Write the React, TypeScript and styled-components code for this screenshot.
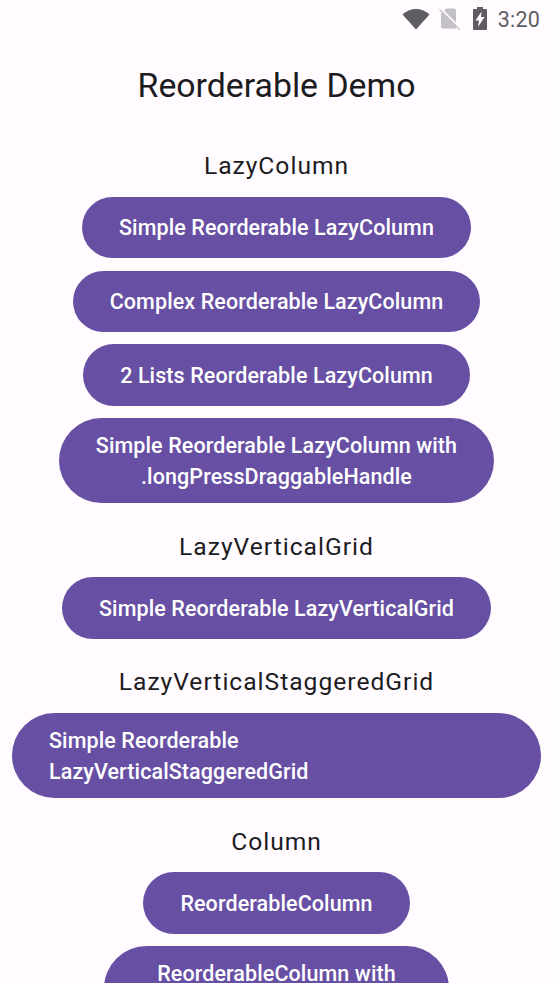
import { Fragment } from 'react';
import styled, { createGlobalStyle } from 'styled-components';

const GlobalStyle = createGlobalStyle`
  html, body {
    margin: 0;
    padding: 0;
    background: #fffbfe;
  }
`;

const Screen = styled.div`
  width: 553px;
  height: 983px;
  overflow: hidden;
  background: #fffbfe;
  font-family: Roboto, "Liberation Sans", sans-serif;
  color: #1c1b1f;
`;

const StatusBar = styled.div`
  height: 37px;
  display: flex;
  align-items: center;
  justify-content: flex-end;
  padding-right: 13px;
  color: #5f5d62;
`;

const StatusIcon = styled.svg<{ $gap?: number }>`
  display: block;
  flex: none;
  margin-left: ${(p) => p.$gap ?? 0}px;
`;

const Clock = styled.span`
  font-size: 21.5px;
  line-height: 26px;
  margin-left: 11px;
  padding-top: 2px;
  letter-spacing: 0.2px;
`;

const Content = styled.div`
  display: flex;
  flex-direction: column;
  align-items: center;
  padding: 0 12px;
`;

const Title = styled.h1`
  margin: 27px 0 16px;
  font-size: 33.8px;
  line-height: 43px;
  font-weight: 400;
  text-align: center;
`;

const SectionTitle = styled.h2`
  margin: 24.4px 0 0;
  font-size: 24.6px;
  line-height: 37px;
  font-weight: 400;
  letter-spacing: 1px;
  text-align: center;
`;

const ButtonList = styled.div`
  display: flex;
  flex-direction: column;
  align-items: center;
  gap: 12.3px;
  margin-top: 12.6px;
  width: 100%;
`;

const PillButton = styled.button<{ $wide?: boolean }>`
  box-sizing: border-box;
  display: block;
  flex: none;
  min-height: 61.4px;
  width: ${(p) => (p.$wide ? '100%' : 'auto')};
  padding: 13px 37px 11px;
  border: none;
  border-radius: 999px;
  background: #6750a4;
  color: #fff;
  font-family: inherit;
  font-size: 21.5px;
  line-height: 30.7px;
  font-weight: 500;
  letter-spacing: 0.1px;
  text-align: ${(p) => (p.$wide ? 'left' : 'center')};
`;

const sections = [
  {
    title: 'LazyColumn',
    buttons: [
      ['Simple Reorderable LazyColumn'],
      ['Complex Reorderable LazyColumn'],
      ['2 Lists Reorderable LazyColumn'],
      ['Simple Reorderable LazyColumn with', '.longPressDraggableHandle'],
    ],
  },
  { title: 'LazyVerticalGrid', buttons: [['Simple Reorderable LazyVerticalGrid']] },
  {
    title: 'LazyVerticalStaggeredGrid',
    buttons: [['Simple Reorderable', 'LazyVerticalStaggeredGrid']],
    wide: true,
  },
  {
    title: 'Column',
    buttons: [['ReorderableColumn'], ['ReorderableColumn with', '.longPressDraggableHandle']],
  },
];

export default function App() {
  return (
    <Screen>
      <GlobalStyle />
      <StatusBar>
        <StatusIcon width="28" height="22" viewBox="0 0 28 22">
          <path d="M14 21.500 0.500 6.500C4 3 9 1 14 1s10 2 13.500 5.500z" fill="currentColor" />
        </StatusIcon>
        <StatusIcon $gap={9} width="22" height="26" viewBox="0 0 22 26">
          <path d="M7 2.500h8a2 2 0 0 1 2 2v18H4a2 2 0 0 1-2-2v-13z" fill="#c4c1c6" />
          <path d="M1 2 21 22" stroke="#fffbfe" strokeWidth="2" fill="none" />
          <path d="M0.500 3.500 20.500 23.500" stroke="#c4c1c6" strokeWidth="1.500" fill="none" />
        </StatusIcon>
        <StatusIcon $gap={12} width="14" height="23" viewBox="0 0 14 23">
          <path
            fillRule="evenodd"
            d="M4 0h6v2h3a1 1 0 0 1 1 1v19a1 1 0 0 1-1 1H1a1 1 0 0 1-1-1V3a1 1 0 0 1 1-1h3zM8.500 4.500 2.500 13.500h3.500l-1 6.500L11.500 10H8z"
            fill="currentColor"
          />
        </StatusIcon>
        <Clock>3:20</Clock>
      </StatusBar>
      <Content>
        <Title>Reorderable Demo</Title>
        {sections.map((section) => (
          <Fragment key={section.title}>
            <SectionTitle>{section.title}</SectionTitle>
            <ButtonList>
              {section.buttons.map((lines) => (
                <PillButton key={lines.join(' ')} $wide={section.wide}>
                  {lines.map((line) => (
                    <div key={line}>{line}</div>
                  ))}
                </PillButton>
              ))}
            </ButtonList>
          </Fragment>
        ))}
      </Content>
    </Screen>
  );
}
